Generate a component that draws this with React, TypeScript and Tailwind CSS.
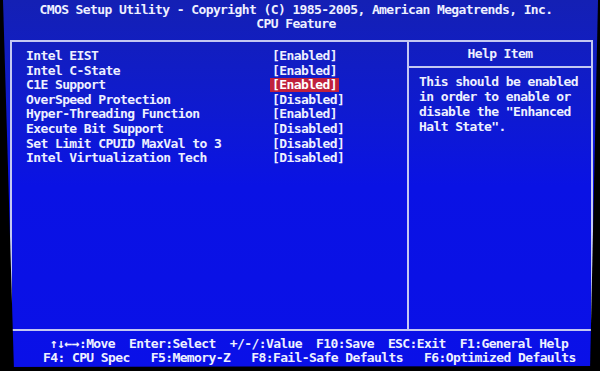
import React from "react";

const rows: { label: string; value: string; sel?: boolean }[] = [
  { label: "Intel EIST", value: "[Enabled]" },
  { label: "Intel C-State", value: "[Enabled]" },
  { label: "C1E Support", value: "[Enabled]", sel: true },
  { label: "OverSpeed Protection", value: "[Disabled]" },
  { label: "Hyper-Threading Function", value: "[Enabled]" },
  { label: "Execute Bit Support", value: "[Disabled]" },
  { label: "Set Limit CPUID MaxVal to 3", value: "[Disabled]" },
  { label: "Intel Virtualization Tech", value: "[Disabled]" },
];

export default function App() {
  return (
    <div
      className="relative w-[600px] h-[371px] overflow-hidden bg-gradient-to-b from-[#1420b4] via-[#0a12e4] to-[#0a10e8] text-[#eef0ff] font-bold text-[13px] tracking-[-0.6px] whitespace-pre"
      style={{ fontFamily: '"DejaVu Sans Mono", "Liberation Mono", monospace' }}
    >
      <div className="flex flex-col items-center pt-[3px] pr-[8px] leading-[13.5px]">
        <div>CMOS Setup Utility - Copyright (C) 1985-2005, American Megatrends, Inc.</div>
        <div>CPU Feature</div>
      </div>

      <div className="ml-[10px] mt-[10px] w-[583px] h-[291px] border-2 border-[#c4c8f2] flex">
        <div className="w-[397px] border-r-2 border-[#c4c8f2] pt-[7px] pl-[14px]">
          {rows.map((r) => (
            <div key={r.label} className="flex h-[14.6px] leading-[14.6px]">
              <div className="w-[246px]">{r.label}</div>
              <div
                className={
                  r.sel
                    ? "bg-[#c0203c] px-[2px] -ml-[2px] h-[14px] leading-[14px] text-white"
                    : ""
                }
              >
                {r.value}
              </div>
            </div>
          ))}
        </div>
        <div className="flex-1 flex flex-col">
          <div className="h-[26px] border-b-2 border-[#c4c8f2] flex items-center justify-center">
            Help Item
          </div>
          <div className="pt-[6px] pl-[10px] leading-[15px]">
            <div>This should be enabled</div>
            <div>in order to enable or</div>
            <div>disable the "Enhanced</div>
            <div>Halt State".</div>
          </div>
        </div>
      </div>

      <div className="mt-[6px] leading-[13.5px]">
        <div className="flex pl-[50px] gap-[14px]">
          <span>↑↓←→:Move</span>
          <span>Enter:Select</span>
          <span>+/-/:Value</span>
          <span>F10:Save</span>
          <span>ESC:Exit</span>
          <span>F1:General Help</span>
        </div>
        <div className="flex pl-[43px] gap-[21px]">
          <span>F4: CPU Spec</span>
          <span>F5:Memory-Z</span>
          <span>F8:Fail-Safe Defaults</span>
          <span>F6:Optimized Defaults</span>
        </div>
      </div>

      <svg
        className="absolute inset-0 pointer-events-none"
        width="600"
        height="371"
        viewBox="0 0 600 371"
      >
        <polygon points="0,0 3,0 14,371 0,371" fill="#000" />
        <polygon points="600,0 598,0 590,371 600,371" fill="#000" />
        <polygon points="0,367 600,366 600,371 0,371" fill="#000" />
      </svg>
    </div>
  );
}
